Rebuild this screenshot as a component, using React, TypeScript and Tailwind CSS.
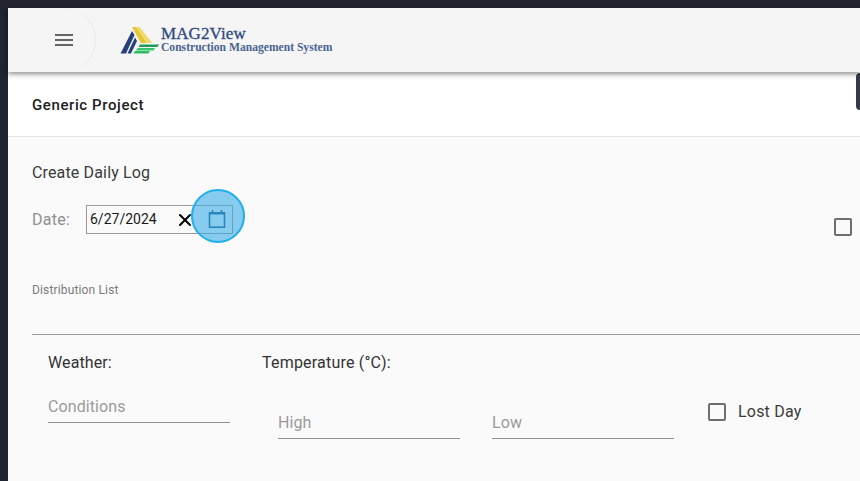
import { X } from 'lucide-react';

function Underlined({ placeholder, className }: { placeholder: string; className: string }) {
  return (
    <div className={`border-b border-[#8c8c8c] h-[28px] text-[16px] leading-[24px] tracking-[0.1px] text-[#9a9a9a] ${className}`}>
      {placeholder}
    </div>
  );
}

function Logo() {
  return (
    <svg width="40" height="30" viewBox="0 0 40 30" className="shrink-0">
      {/* yellow stripes */}
      <polygon points="12,2 16,2 27,18 21,18" fill="#e6c52e" />
      <polygon points="16,2 19.5,2 32.5,18 27,18" fill="#f0da6e" />
      {/* navy stripes */}
      <polygon points="12,6 14.5,10 6,28.5 0.5,28.5" fill="#27407c" />
      <polygon points="15,12.5 17,16 11,28.5 7.5,28.5" fill="#27407c" />
      {/* green stripes */}
      <polygon points="20,19.5 39,19.5 37.5,22 18.5,22" fill="#1f9a58" />
      <polygon points="17.5,23 35,23 33.5,25.5 16,25.5" fill="#35c46f" />
      <polygon points="15,26 30,26 28.5,28.5 13.5,28.5" fill="#2fb866" />
    </svg>
  );
}

export default function App() {
  return (
    <div className="h-[481px] overflow-hidden bg-[#22242f] pt-2 pl-2 font-['Roboto',sans-serif]">
      <div className="relative h-full bg-[#fafafa]">
        {/* top bar */}
        <header className="relative z-10 flex h-16 items-center bg-[#f5f5f5] shadow-[0_2px_5px_rgba(0,0,0,0.45)]">
          <div className="flex h-16 w-[88px] items-center rounded-r-[44px] border-r border-[#e6e6e6] pl-[44px]">
            <svg width="24" height="24" viewBox="0 0 24 24" fill="#666666">
              <path d="M3 18h18v-2H3v2zm0-5h18v-2H3v2zm0-7v2h18V6H3z" />
            </svg>
          </div>
          <div className="ml-6 flex items-center gap-[1px]">
            <Logo />
            <div className="-mt-[1px] font-['Liberation_Serif',serif] text-[#2e4a7d]">
              <div className="text-[17px] leading-[17px] tracking-[0.1px] [-webkit-text-stroke:0.3px_#2e4a7d]">MAG2View</div>
              <div className="text-[11.6px] font-bold leading-[12px] text-[#4a6490]">Construction Management System</div>
            </div>
          </div>
        </header>

        {/* project bar */}
        <div className="relative flex h-[65px] items-center border-b border-[#e4e4e4] bg-white pl-6 pt-[3px]">
          <span className="text-[15px] font-medium tracking-[0.6px] text-[#212121]">Generic Project</span>
          <div className="absolute right-0 top-[1px] h-[37px] w-1 rounded-l-[4px] bg-[#343a48]" />
        </div>

        {/* form */}
        <div className="pl-6">
          <div className="pt-[26px] text-[16px] leading-[20px] tracking-[0.15px] text-[#3c3c3c]">Create Daily Log</div>

          <div className="mt-[22px] flex items-start justify-between pr-2">
            <div className="flex items-center">
              <span className="w-[54px] text-[16px] tracking-[0.3px] text-[#8f8f8f]">Date:</span>
              <div className="relative flex h-[29px] w-[147px] items-center border border-[#9a9a9a] pl-[3px] text-[14px] text-[#1a1a1a]">
                <span>6/27/2024</span>
                <X className="absolute left-[88px] top-[4px] h-5 w-5 text-black" strokeWidth={2.4} />
                <div className="absolute left-[104px] top-[-17px] z-10 h-[54px] w-[54px] rounded-full border-2 border-[#1eaeea] bg-[#3aade6]/60" />
                <svg width="20" height="20" viewBox="0 0 20 20" fill="none" stroke="#2a86bb" strokeWidth="1.6" className="absolute left-[120px] top-[3px] z-20">
                  <rect x="2.5" y="3.8" width="15" height="14.4" />
                  <path d="M2.5 4.8h15M5.5 1v3M14.5 1v3" />
                </svg>
              </div>
            </div>
            <div className="mt-[13px] h-[18px] w-[18px] rounded-[2px] border-2 border-[#6e6e6e]" />
          </div>

          <div className="mt-[47px] text-[12px] leading-[14px] tracking-[0.15px] text-[#7a7a7a]">Distribution List</div>
          <div className="mt-[37px] border-b border-[#999999]" />

          <div className="flex pl-4 pt-[18px]">
            <div className="w-[182px]">
              <div className="text-[16px] leading-[20px] tracking-[0.1px] text-[#333333]">Weather:</div>
              <Underlined placeholder="Conditions" className="mt-[22px]" />
            </div>
            <div className="ml-8">
              <div className="text-[16px] leading-[20px] tracking-[0.2px] text-[#333333]">Temperature (°C):</div>
              <div className="mt-[38px] ml-4 flex gap-8">
                <Underlined placeholder="High" className="w-[182px]" />
                <Underlined placeholder="Low" className="w-[182px]" />
                <div className="-mt-[8px] ml-[2px] flex items-start">
                  <div className="h-[18px] w-[18px] rounded-[2px] border-2 border-[#6e6e6e]" />
                  <span className="ml-3 text-[16px] leading-[18px] tracking-[0.2px] text-[#3c3c3c]">Lost Day</span>
                </div>
              </div>
            </div>
          </div>
        </div>
      </div>
    </div>
  );
}
